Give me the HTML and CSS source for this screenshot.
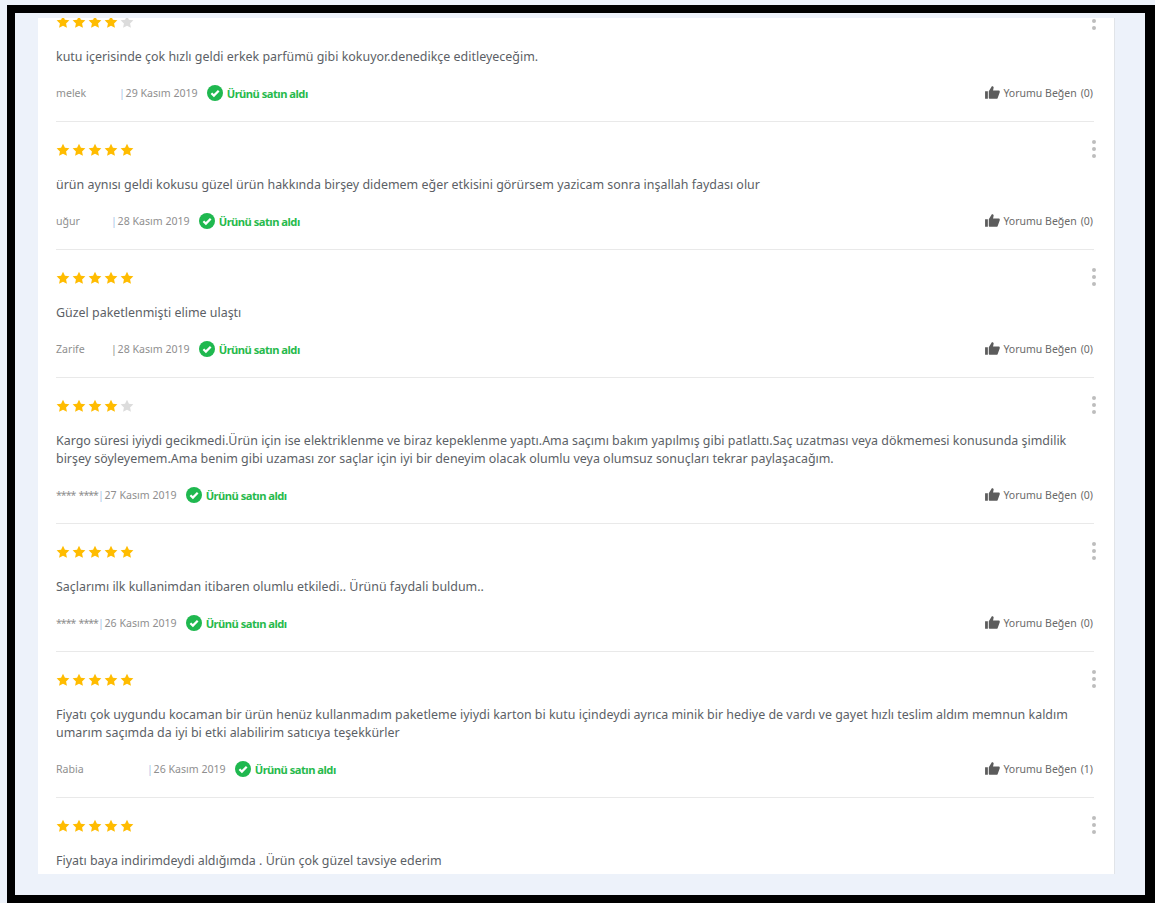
FILE: index.html
```html
<!DOCTYPE html>
<html lang="tr">
<head>
<meta charset="utf-8">
<title>Yorumlar</title>
<link rel="stylesheet" href="styles.css">
</head>
<body>
<svg class="defs" width="0" height="0" aria-hidden="true">
  <symbol id="star" viewBox="0 0 16 16"><path d="M8 .8l2.2 4.7 5.1.6-3.8 3.5 1 5.1L8 12.2l-4.5 2.5 1-5.1L.7 6.1l5.1-.6z"/></symbol>
  <symbol id="check" viewBox="0 0 16 16"><circle cx="8" cy="8" r="8" fill="#1fb84f"/><path d="M4.4 8.2l2.5 2.4 4.8-4.9" fill="none" stroke="#fff" stroke-width="2.2"/></symbol>
  <symbol id="thumb" viewBox="0 0 16 14"><path d="M0 5.600h3v8.200H0zM4 5.600L7.300.3c1.300-.4 2.100.5 1.900 1.700L8.600 4.800h5.900c1 0 1.600.9 1.300 1.800l-2.200 6.300c-.2.600-.7.900-1.300.9H5.300C4.600 14 4 13.400 4 12.700z"/></symbol>
</svg>
<div class="frame">
  <main class="card">
    <div class="list">

      <article class="review">
        <div class="stars"><svg class="star"><use href="#star"/></svg><svg class="star"><use href="#star"/></svg><svg class="star"><use href="#star"/></svg><svg class="star"><use href="#star"/></svg><svg class="star off"><use href="#star"/></svg></div>
        <p class="text">kutu içerisinde çok hızlı geldi erkek parfümü gibi kokuyor.denedikçe editleyeceğim.</p>
        <div class="meta">
          <span class="who"><span class="name n-melek">melek</span><span class="pipe">|</span> 29 Kasım 2019</span>
          <span class="bought"><svg class="check"><use href="#check"/></svg>Ürünü satın aldı</span>
          <span class="like"><svg class="thumb"><use href="#thumb"/></svg>Yorumu Beğen<span class="count">(0)</span></span>
        </div>
        <div class="dots"><i></i><i></i><i></i></div>
      </article>

      <article class="review">
        <div class="stars"><svg class="star"><use href="#star"/></svg><svg class="star"><use href="#star"/></svg><svg class="star"><use href="#star"/></svg><svg class="star"><use href="#star"/></svg><svg class="star"><use href="#star"/></svg></div>
        <p class="text">ürün aynısı geldi kokusu güzel ürün hakkında birşey didemem eğer etkisini görürsem yazicam sonra inşallah faydası olur</p>
        <div class="meta">
          <span class="who"><span class="name n-ugur">uğur</span><span class="pipe">|</span> 28 Kasım 2019</span>
          <span class="bought"><svg class="check"><use href="#check"/></svg>Ürünü satın aldı</span>
          <span class="like"><svg class="thumb"><use href="#thumb"/></svg>Yorumu Beğen<span class="count">(0)</span></span>
        </div>
        <div class="dots"><i></i><i></i><i></i></div>
      </article>

      <article class="review">
        <div class="stars"><svg class="star"><use href="#star"/></svg><svg class="star"><use href="#star"/></svg><svg class="star"><use href="#star"/></svg><svg class="star"><use href="#star"/></svg><svg class="star"><use href="#star"/></svg></div>
        <p class="text">Güzel paketlenmişti elime ulaştı</p>
        <div class="meta">
          <span class="who"><span class="name n-zarife">Zarife</span><span class="pipe grey">|</span> 28 Kasım 2019</span>
          <span class="bought"><svg class="check"><use href="#check"/></svg>Ürünü satın aldı</span>
          <span class="like"><svg class="thumb"><use href="#thumb"/></svg>Yorumu Beğen<span class="count">(0)</span></span>
        </div>
        <div class="dots"><i></i><i></i><i></i></div>
      </article>

      <article class="review">
        <div class="stars"><svg class="star"><use href="#star"/></svg><svg class="star"><use href="#star"/></svg><svg class="star"><use href="#star"/></svg><svg class="star"><use href="#star"/></svg><svg class="star off"><use href="#star"/></svg></div>
        <p class="text">Kargo süresi iyiydi gecikmedi.Ürün için ise elektriklenme ve biraz kepeklenme yaptı.Ama saçımı bakım yapılmış gibi patlattı.Saç uzatması veya dökmemesi konusunda şimdilik birşey söyleyemem.Ama benim gibi uzaması zor saçlar için iyi bir deneyim olacak olumlu veya olumsuz sonuçları tekrar paylaşacağım.</p>
        <div class="meta">
          <span class="who"><span class="name masked">**** ****</span><span class="pipe">|</span> 27 Kasım 2019</span>
          <span class="bought"><svg class="check"><use href="#check"/></svg>Ürünü satın aldı</span>
          <span class="like"><svg class="thumb"><use href="#thumb"/></svg>Yorumu Beğen<span class="count">(0)</span></span>
        </div>
        <div class="dots"><i></i><i></i><i></i></div>
      </article>

      <article class="review">
        <div class="stars"><svg class="star"><use href="#star"/></svg><svg class="star"><use href="#star"/></svg><svg class="star"><use href="#star"/></svg><svg class="star"><use href="#star"/></svg><svg class="star"><use href="#star"/></svg></div>
        <p class="text">Saçlarımı ilk kullanimdan itibaren olumlu etkiledi.. Ürünü faydali buldum..</p>
        <div class="meta">
          <span class="who"><span class="name masked">**** ****</span><span class="pipe">|</span> 26 Kasım 2019</span>
          <span class="bought"><svg class="check"><use href="#check"/></svg>Ürünü satın aldı</span>
          <span class="like"><svg class="thumb"><use href="#thumb"/></svg>Yorumu Beğen<span class="count">(0)</span></span>
        </div>
        <div class="dots"><i></i><i></i><i></i></div>
      </article>

      <article class="review">
        <div class="stars"><svg class="star"><use href="#star"/></svg><svg class="star"><use href="#star"/></svg><svg class="star"><use href="#star"/></svg><svg class="star"><use href="#star"/></svg><svg class="star"><use href="#star"/></svg></div>
        <p class="text">Fiyatı çok uygundu kocaman bir ürün henüz kullanmadım paketleme iyiydi karton bi kutu içindeydi ayrıca minik bir hediye de vardı ve gayet hızlı teslim aldım memnun kaldım umarım saçımda da iyi bi etki alabilirim satıcıya teşekkürler</p>
        <div class="meta">
          <span class="who"><span class="name n-rabia">Rabia</span><span class="pipe">|</span> 26 Kasım 2019</span>
          <span class="bought"><svg class="check"><use href="#check"/></svg>Ürünü satın aldı</span>
          <span class="like"><svg class="thumb"><use href="#thumb"/></svg>Yorumu Beğen<span class="count">(1)</span></span>
        </div>
        <div class="dots"><i></i><i></i><i></i></div>
      </article>

      <article class="review">
        <div class="stars"><svg class="star"><use href="#star"/></svg><svg class="star"><use href="#star"/></svg><svg class="star"><use href="#star"/></svg><svg class="star"><use href="#star"/></svg><svg class="star"><use href="#star"/></svg></div>
        <p class="text">Fiyatı baya indirimdeydi aldığımda . Ürün çok güzel tavsiye ederim</p>
        <div class="dots"><i></i><i></i><i></i></div>
      </article>

    </div>
  </main>
</div>
</body>
</html>
```
FILE: styles.css
```css
* { box-sizing: border-box; }
html, body { margin: 0; height: 100%; }
body {
  width: 1155px;
  height: 903px;
  overflow: hidden;
  background: #edf2fa;
  padding: 5px 0 0 7px;
  font-family: "Noto Sans", "Open Sans", sans-serif;
  font-size: 12px;
  color: #555;
}
.defs { position: absolute; }
.frame {
  width: 1148px;
  height: 898px;
  border: solid #000;
  border-width: 8px 10px 8px 8px;
  background: #edf2fa;
  padding: 5px 30px 21px 23px;
}
.card {
  height: 856px;
  background: #fff;
  border-right: 1px solid #e1e4e8;
  overflow: hidden;
  padding: 0 20px 0 18px;
}
.list { margin-top: -24px; }
.review {
  position: relative;
  border-bottom: 1px solid #e9e9e9;
  padding-top: 21px;
}
.review:last-child { border-bottom: 0; }
.stars { display: flex; gap: 2px; height: 14px; align-items: center; }
.star { width: 14px; height: 14px; flex: none; fill: #ffbc00; }
.star.off { fill: #dcdcdc; }
.text {
  margin: 19px 0 0;
  font-size: 12.45px;
  line-height: 18px;
  color: #5c5f66;
}
.meta {
  display: flex;
  align-items: center;
  height: 20px;
  margin-top: 17px;
  margin-bottom: 18px;
}
.who { margin-top: -1px; font-size: 10.6px; color: #8f8f8f; }
.name { display: inline-block; }
.masked { letter-spacing: -1px; word-spacing: 1.5px; }
.pipe { margin-right: -2px; color: #a9c6e8; }
.pipe.grey { color: #8f8f8f; }
.n-melek { width: 63px; }
.n-ugur { width: 55px; }
.n-zarife { width: 55px; }
.n-rabia { width: 91px; }
.bought {
  display: flex;
  align-items: center;
  margin-left: 9px;
  font-size: 11.2px;
  font-weight: 700;
  letter-spacing: -.52px;
  color: #27ba4c;
}
.check { width: 16px; height: 16px; margin-right: 4px; }
.like {
  display: flex;
  align-items: center;
  margin-left: auto;
  padding-right: 1px;
  font-size: 10.5px;
  color: #6a6a6a;
}
.thumb { width: 15px; height: 13px; margin-top: -2px; margin-right: 3px; fill: #5c5c5c; }
.count { margin-left: 4px; }
.dots {
  position: absolute;
  top: 18px;
  right: -2px;
  display: flex;
  flex-direction: column;
  gap: 3px;
}
.dots i { width: 4px; height: 4px; border-radius: 50%; background: #bdbdbd; }
```
